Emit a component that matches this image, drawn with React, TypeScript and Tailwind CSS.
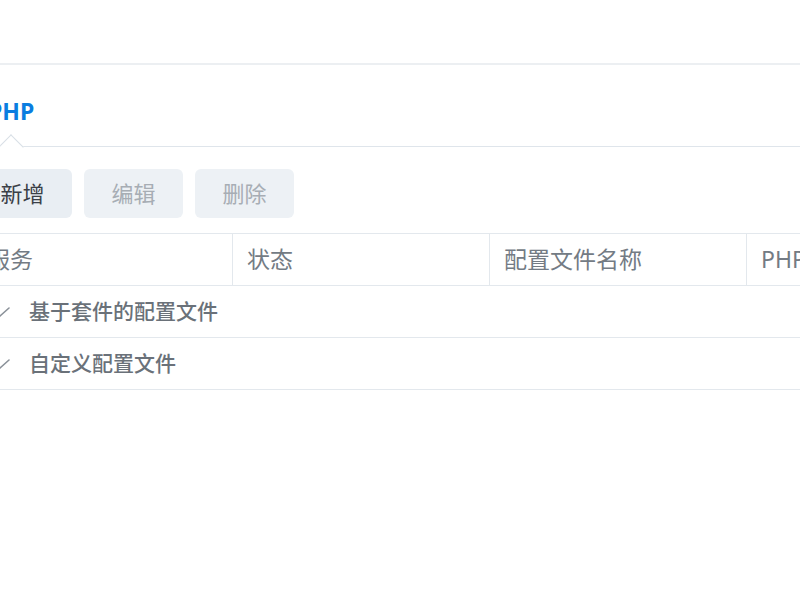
import React from 'react';

const font = "font-['Noto_Sans','Noto_Sans_CJK_SC',sans-serif]";

const columns = [
  { label: '服务', width: 'w-[259px]' },
  { label: '状态', width: 'w-[257px]' },
  { label: '配置文件名称', width: 'w-[257px]' },
  { label: 'PHP 版本', width: 'w-[257px]' },
];

const groups = ['基于套件的配置文件', '自定义配置文件'];

const Chevron: React.FC = () => (
  <svg width="22" height="22" viewBox="0 0 22 22" fill="none" stroke="#8a9199" strokeWidth="1.6" strokeLinecap="round">
    <polyline points="2,7 11,15 20,7" />
  </svg>
);

const App: React.FC = () => {
  return (
    <div className={`w-[800px] h-[600px] overflow-hidden bg-white ${font}`}>
      <div className="h-[63px]" />
      <div className="border-t-2 border-[#eceff2]">
        <div className="ml-[-27px] w-[1100px]">
          {/* tab bar */}
          <div className="h-[82px] flex items-end border-b border-[#dfe5eb]">
            <div className="relative px-[15px] pb-[20px]">
              <span className="text-[23px] leading-[24px] font-bold text-[#0a7de0]">PHP</span>
              <div className="absolute left-1/2 bottom-[-10px] -ml-[9px] w-[18px] h-[18px] rotate-45 bg-white border-l border-t border-[#d8dfe6]" />
            </div>
          </div>

          {/* toolbar */}
          <div className="flex gap-[12px] mt-[22px]">
            <button className="w-[99px] h-[49px] rounded-[6px] bg-[#e9eef3] text-[22px] text-[#3b4047]">新增</button>
            <button className="w-[99px] h-[49px] rounded-[6px] bg-[#edf1f5] text-[22px] text-[#a7adb4]">编辑</button>
            <button className="w-[99px] h-[49px] rounded-[6px] bg-[#edf1f5] text-[22px] text-[#a7adb4]">删除</button>
          </div>

          {/* table */}
          <div className="mt-[15px] border-t border-[#e3e8ed]">
            <div className="flex h-[52px] border-b border-[#e3e8ed]">
              {columns.map((c, i) => (
                <div
                  key={c.label}
                  className={`${c.width} flex items-center px-[14px] text-[23px] text-[#737b84] ${i > 0 ? 'border-l border-[#e3e8ed]' : ''}`}
                >
                  {c.label}
                </div>
              ))}
            </div>
            {groups.map((g) => (
              <div key={g} className="flex items-center h-[52px] border-b border-[#e3e8ed] pl-[16px] gap-[18px]">
                <Chevron />
                <span className="text-[21px] font-medium text-[#6a7179]">{g}</span>
              </div>
            ))}
          </div>
        </div>
      </div>
    </div>
  );
};

export default App;
